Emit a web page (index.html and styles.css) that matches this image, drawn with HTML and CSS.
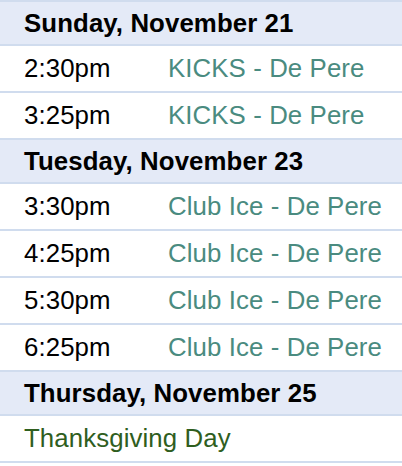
FILE: index.html
```html
<!DOCTYPE html>
<html>
<head>
<meta charset="utf-8">
<link rel="stylesheet" href="styles.css">
</head>
<body>
<div class="agenda">
  <div class="day">Sunday, November 21</div>
  <div class="row"><span class="time">2:30pm</span><span class="event">KICKS - De Pere</span></div>
  <div class="row"><span class="time">3:25pm</span><span class="event">KICKS - De Pere</span></div>
  <div class="day">Tuesday, November 23</div>
  <div class="row"><span class="time">3:30pm</span><span class="event">Club Ice - De Pere</span></div>
  <div class="row"><span class="time">4:25pm</span><span class="event">Club Ice - De Pere</span></div>
  <div class="row"><span class="time">5:30pm</span><span class="event">Club Ice - De Pere</span></div>
  <div class="row"><span class="time">6:25pm</span><span class="event">Club Ice - De Pere</span></div>
  <div class="day">Thursday, November 25</div>
  <div class="row"><span class="holiday">Thanksgiving Day</span></div>
</div>
</body>
</html>
```
FILE: styles.css
```css
html, body {
  margin: 0;
  padding: 0;
  background: #ffffff;
}
.agenda {
  font-family: "Liberation Sans", Arial, sans-serif;
  font-size: 25.8px;
  letter-spacing: 0.1px;
  border-top: 2px solid #d0dcee;
}
.day {
  height: 42px;
  display: flex;
  align-items: center;
  padding-left: 24px;
  background: #e4eaf7;
  font-weight: bold;
  color: #000;
  border-bottom: 2px solid #d0dcee;
}
.row {
  height: 45px;
  display: flex;
  align-items: center;
  padding-left: 24px;
  border-bottom: 2px solid #d0dcee;
}
.time {
  width: 144px;
  color: #000;
}
.event {
  color: #4a8b80;
}
.holiday {
  color: #2f5e1e;
}
```
